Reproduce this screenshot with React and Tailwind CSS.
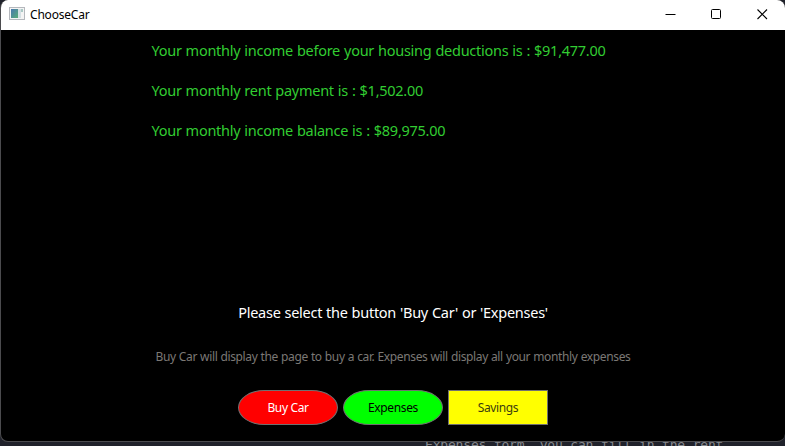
const incomeLines = [
  'Your monthly income before your housing deductions is : $91,477.00',
  'Your monthly rent payment is : $1,502.00',
  'Your monthly income balance is : $89,975.00',
];

function TitleBar() {
  return (
    <header className="flex h-[30px] shrink-0 items-start bg-white text-black">
      <svg className="ml-2 mt-[7px] h-[14px] w-4" viewBox="0 0 16 14" shapeRendering="crispEdges">
        <defs>
          <linearGradient id="pane" x1="0" y1="0" x2="1" y2="1">
            <stop offset="0" stopColor="#4a78b0" />
            <stop offset="1" stopColor="#58ad78" />
          </linearGradient>
        </defs>
        <rect x="0.5" y="0.5" width="15" height="12" fill="#f4f4f4" stroke="#b5b8bd" />
        <rect x="2" y="2" width="7" height="9" fill="url(#pane)" />
        <rect x="9" y="2" width="3" height="9" fill="#d5e0e4" />
        <rect x="12" y="2" width="2" height="3" fill="#a9c8c4" />
      </svg>
      <span className="ml-[5px] mt-[7px] text-[12px] leading-4 tracking-[-0.2px]">ChooseCar</span>
      <div className="ml-auto mr-[17px] mt-[9px] flex gap-[35px]">
        <svg width="11" height="11" viewBox="0 0 11 11" fill="none" stroke="#000">
          <path d="M0.5 5.5H10.5" />
        </svg>
        <svg width="11" height="11" viewBox="0 0 11 11" fill="none" stroke="#000">
          <rect x="0.5" y="0.5" width="9" height="9" rx="1" />
        </svg>
        <svg width="11" height="11" viewBox="0 0 11 11" fill="none" stroke="#000" strokeWidth="1.1">
          <path d="M0.5 0.5L10 10M10 0.5L0.5 10" />
        </svg>
      </div>
    </header>
  );
}

export default function App() {
  return (
    <div className="relative h-[446px] w-[785px] overflow-hidden bg-[#20222b] font-['Noto_Sans','Open_Sans',sans-serif]">
      <div className="flex h-[442px] flex-col overflow-hidden whitespace-nowrap rounded-[8px] border-b border-l border-[#4b4b4e] bg-black">
        <TitleBar />
        <main className="flex grow flex-col items-center">
          <div className="ml-[150.5px] mt-[10px] flex flex-col gap-5 self-start text-[14.5px] leading-5 text-[#32cd32]">
            {incomeLines.map((line) => (
              <p key={line} className="tracking-[-0.27px] [word-spacing:0.5px]">{line}</p>
            ))}
          </div>
          <p className="mt-[162px] text-[14.5px] leading-5 tracking-[-0.26px] text-white [word-spacing:0.4px]">
            Please select the button 'Buy Car' or 'Expenses'
          </p>
          <p className="mt-[27px] text-[12px] leading-4 tracking-[-0.36px] text-[#7b7875] [word-spacing:0.3px]">
            Buy Car will display the page to buy a car. Expenses will display all your monthly expenses
          </p>
          <div className="mt-[25px] flex gap-[5px] text-[12px] tracking-[-0.36px]">
            <button className="h-[35px] w-[100px] rounded-[30px/20px] border border-[#707070] bg-[#ff0000] text-white">Buy Car</button>
            <button className="h-[35px] w-[100px] rounded-[30px/20px] border border-[#707070] bg-[#00ff00] text-black">Expenses</button>
            <button className="h-[35px] w-[100px] border border-[#707070] bg-[#ffff00] text-[#3c3c10]">Savings</button>
          </div>
        </main>
      </div>
      <div className="h-1 overflow-hidden">
        <p className="-mt-[5px] ml-[425px] whitespace-pre font-['DejaVu_Sans_Mono',monospace] text-[13px] leading-4 tracking-[-0.18px] text-[#85888d]">Expenses form, you can fill in the rent</p>
      </div>
    </div>
  );
}
